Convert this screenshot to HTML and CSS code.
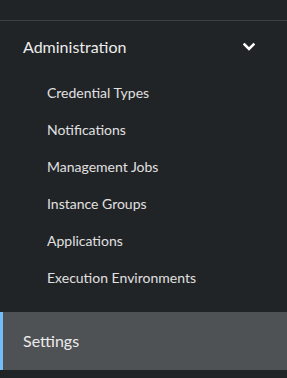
FILE: index.html
```html
<!DOCTYPE html>
<html lang="en">
<head>
    <meta charset="UTF-8">
    <meta name="viewport" content="width=device-width, initial-scale=1.0">
    <title>Navigation</title>
    <link rel="stylesheet" href="styles.css">
</head>
<body>
    <nav class="nav">
        <div class="nav-divider"></div>

        <div class="nav-group">
            <div class="nav-toggle">
                <span>Administration</span>
                <svg class="chevron" width="12" height="10" viewBox="0 0 12 10">
                    <path d="M1.5 2.5 L6 7 L10.5 2.5" fill="none" stroke="#fff" stroke-width="2.6" stroke-linecap="square"/>
                </svg>
            </div>
            <ul class="subnav">
                <li>Credential Types</li>
                <li>Notifications</li>
                <li>Management Jobs</li>
                <li>Instance Groups</li>
                <li>Applications</li>
                <li>Execution Environments</li>
            </ul>
        </div>

        <div class="nav-item active">Settings</div>
    </nav>
</body>
</html>
```

FILE: styles.css
```css
html, body {
    margin: 0;
    padding: 0;
}
body {
    width: 287px;
    height: 378px;
    background: #212427;
    font-family: Lato, "Open Sans", sans-serif;
    color: #ececec;
    overflow: hidden;
}
.nav {
    padding-top: 20px;
}
.nav-divider {
    height: 1px;
    background: #3c3f42;
}
.nav-toggle {
    display: flex;
    justify-content: space-between;
    align-items: center;
    height: 51px;
    padding: 0 32px 2px 23px;
    font-size: 16px;
}
.chevron {
    display: block;
    margin-top: 1px;
}
.subnav {
    list-style: none;
    margin: 0;
    padding: 0;
}
.subnav li {
    height: 37px;
    line-height: 37px;
    padding-left: 47px;
    font-size: 14px;
    color: #e0e0e0;
}
.nav-item {
    margin-top: 16px;
    height: 58px;
    line-height: 58px;
    padding-left: 20px;
    border-left: 3px solid #73bcf7;
    font-size: 16px;
}
.nav-item.active {
    background: #4f5255;
}
```
